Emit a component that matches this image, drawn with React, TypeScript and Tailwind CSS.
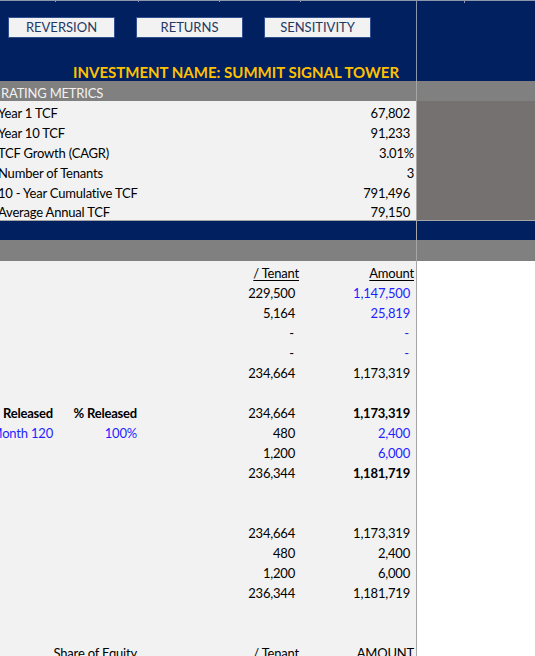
import React from 'react';

const font = { fontFamily: 'Lato, "Liberation Sans", sans-serif' };

type Cells = {
  a?: React.ReactNode;
  b?: React.ReactNode;
  d?: React.ReactNode;
  e?: React.ReactNode;
};

// one 20px sheet row in the lower block: columns A-E on the left, empty sheet on the right
function Row({ a, b, d, e }: Cells) {
  return (
    <div className="flex h-[20px]">
      <div className="flex w-[417px] items-center pt-[4px] bg-[#f2f2f2] border-r border-[#a6a6a6] text-[13px] tracking-[-0.2px] leading-none whitespace-nowrap">
        <div className="flex w-[56px] justify-end pr-[3px]">{a}</div>
        <div className="flex w-[83px] justify-end pr-[2px]">{b}</div>
        <div className="w-[81px]" />
        <div className="flex w-[81px] justify-end">{d}</div>
        <div className="flex flex-1 justify-end">{e}</div>
      </div>
      <div className="flex-1 bg-white" />
    </div>
  );
}

const num = (v: string, cls = '') => <span className={`pr-[6px] ${cls}`}>{v}</span>;
const dash = (cls = '') => <span className={`pr-[7px] ${cls}`}>-</span>;
const head = (v: string) => <span className="pr-[2px] underline underline-offset-2">{v}</span>;

const metrics = [
  ['Year 1 TCF', '67,802', false],
  ['Year 10 TCF', '91,233', false],
  ['TCF Growth (CAGR)', '3.01%', true],
  ['Number of Tenants', '3', true],
  ['10 - Year Cumulative TCF', '791,496', false],
  ['Average Annual TCF', '79,150', false],
] as const;

export default function App() {
  const blue = 'text-[#1f1fff]';
  return (
    <div className="w-[535px] h-[656px] overflow-hidden bg-white text-black" style={font}>
      {/* navy banner with buttons and title */}
      <div className="flex bg-[#002060]">
        <div className="w-[417px] border-r border-[#8c95ab]">
          <div className="flex h-[2px] border-t border-[#8c95ab]">
            <div className="w-[56px] border-r border-[#8c95ab]" />
            <div className="w-[83px] border-r border-[#8c95ab]" />
            <div className="w-[81px] border-r border-[#8c95ab]" />
            <div className="w-[81px] border-r border-[#8c95ab]" />
          </div>
          <div className="flex gap-[21px] pl-[8px] pt-[15px]">
            {['REVERSION', 'RETURNS', 'SENSITIVITY'].map(t => (
              <div
                key={t}
                className="flex h-[21px] w-[107px] items-center justify-center border border-[#2f4f8f] bg-[#f2f2f2] text-[13px] text-[#1f3864]"
              >
                {t}
              </div>
            ))}
          </div>
          <div className="flex h-[43px] items-end pb-[1px] pl-[56px]">
            <div className="w-full text-center text-[15px] font-bold leading-none text-[#ffc000]">
              INVESTMENT NAME: SUMMIT SIGNAL TOWER
            </div>
          </div>
        </div>
        <div className="flex-1 border-t border-[#8c95ab]">
          <div className="ml-[47px] h-[2px] border-l border-[#8c95ab]" />
        </div>
      </div>

      {/* operating metrics header */}
      <div className="flex h-[20px] bg-[#808080]">
        <div className="flex w-[417px] items-center pt-[4px] border-r border-[#a6a6a6] pl-[1px] text-[13px] tracking-[-0.2px] leading-none text-[#f2f2f2]">
          RATING METRICS
        </div>
        <div className="flex-1" />
      </div>

      {/* metrics rows */}
      {metrics.map(([label, value, pct], i) => (
        <div key={label} className={`flex h-[20px] ${i === metrics.length - 1 ? 'border-b border-[#a6a6a6]' : ''}`}>
          <div className="flex w-[417px] items-center justify-between pt-[4px] bg-[#f2f2f2] border-r border-[#a6a6a6] text-[13px] tracking-[-0.2px] leading-none whitespace-nowrap">
            <span className="-ml-[2px]">{label}</span>
            <span className={pct ? 'pr-[2px]' : 'pr-[6px]'}>{value}</span>
          </div>
          <div className="flex-1 bg-[#767171]" />
        </div>
      ))}

      {/* navy divider */}
      <div className="flex h-[19px] bg-[#002060]">
        <div className="w-[417px] border-r border-[#a6a6a6]" />
        <div className="flex-1" />
      </div>
      {/* gray divider */}
      <div className="flex h-[21px] bg-[#808080]">
        <div className="w-[417px] border-r border-[#a6a6a6]" />
        <div className="flex-1" />
      </div>

      {/* lower table */}
      <Row d={head('/ Tenant')} e={head('Amount')} />
      <Row d={num('229,500')} e={num('1,147,500', blue)} />
      <Row d={num('5,164')} e={num('25,819', blue)} />
      <Row d={dash()} e={dash(blue)} />
      <Row d={dash()} e={dash(blue)} />
      <Row d={num('234,664')} e={num('1,173,319')} />
      <Row />
      <Row
        a={<span className="font-bold">Month Released</span>}
        b={<span className="font-bold">% Released</span>}
        d={num('234,664')}
        e={num('1,173,319', 'font-bold')}
      />
      <Row
        a={<span className={blue}>Month 120</span>}
        b={<span className={blue}>100%</span>}
        d={num('480')}
        e={num('2,400', blue)}
      />
      <Row d={num('1,200')} e={num('6,000', blue)} />
      <Row d={num('236,344')} e={num('1,181,719', 'font-bold')} />
      <Row />
      <Row />
      <Row d={num('234,664')} e={num('1,173,319')} />
      <Row d={num('480')} e={num('2,400')} />
      <Row d={num('1,200')} e={num('6,000')} />
      <Row d={num('236,344')} e={num('1,181,719')} />
      <Row />
      <Row />
      <Row b={<span>Share of Equity</span>} d={head('/ Tenant')} e={head('AMOUNT')} />
    </div>
  );
}
